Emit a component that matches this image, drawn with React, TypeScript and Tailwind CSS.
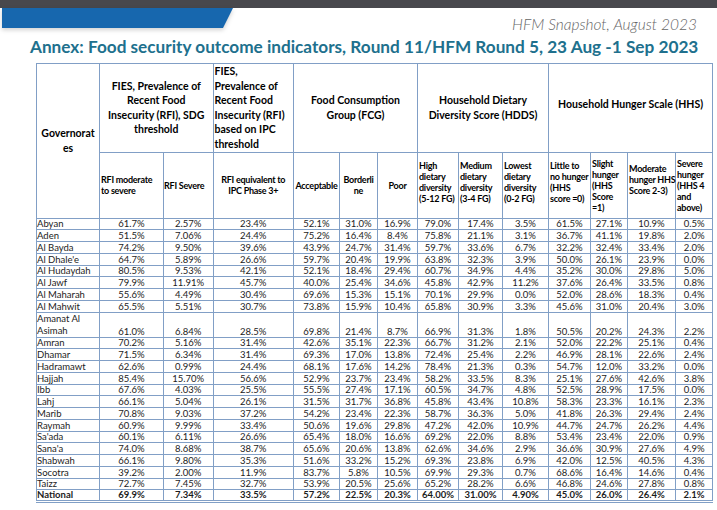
import React from "react";

const rows: string[][] = [
  ["Abyan", "61.7%", "2.57%", "23.4%", "52.1%", "31.0%", "16.9%", "79.0%", "17.4%", "3.5%", "61.5%", "27.1%", "10.9%", "0.5%"],
  ["Aden", "51.5%", "7.06%", "24.4%", "75.2%", "16.4%", "8.4%", "75.8%", "21.1%", "3.1%", "36.7%", "41.1%", "19.8%", "2.0%"],
  ["Al Bayda", "74.2%", "9.50%", "39.6%", "43.9%", "24.7%", "31.4%", "59.7%", "33.6%", "6.7%", "32.2%", "32.4%", "33.4%", "2.0%"],
  ["Al Dhale'e", "64.7%", "5.89%", "26.6%", "59.7%", "20.4%", "19.9%", "63.8%", "32.3%", "3.9%", "50.0%", "26.1%", "23.9%", "0.0%"],
  ["Al Hudaydah", "80.5%", "9.53%", "42.1%", "52.1%", "18.4%", "29.4%", "60.7%", "34.9%", "4.4%", "35.2%", "30.0%", "29.8%", "5.0%"],
  ["Al Jawf", "79.9%", "11.91%", "45.7%", "40.0%", "25.4%", "34.6%", "45.8%", "42.9%", "11.2%", "37.6%", "26.4%", "33.5%", "0.8%"],
  ["Al Maharah", "55.6%", "4.49%", "30.4%", "69.6%", "15.3%", "15.1%", "70.1%", "29.9%", "0.0%", "52.0%", "28.6%", "18.3%", "0.4%"],
  ["Al Mahwit", "65.5%", "5.51%", "30.7%", "73.8%", "15.9%", "10.4%", "65.8%", "30.9%", "3.3%", "45.6%", "31.0%", "20.4%", "3.0%"],
  ["Amanat Al\nAsimah", "61.0%", "6.84%", "28.5%", "69.8%", "21.4%", "8.7%", "66.9%", "31.3%", "1.8%", "50.5%", "20.2%", "24.3%", "2.2%"],
  ["Amran", "70.2%", "5.16%", "31.4%", "42.6%", "35.1%", "22.3%", "66.7%", "31.2%", "2.1%", "52.0%", "22.2%", "25.1%", "0.4%"],
  ["Dhamar", "71.5%", "6.34%", "31.4%", "69.3%", "17.0%", "13.8%", "72.4%", "25.4%", "2.2%", "46.9%", "28.1%", "22.6%", "2.4%"],
  ["Hadramawt", "62.6%", "0.99%", "24.4%", "68.1%", "17.6%", "14.2%", "78.4%", "21.3%", "0.3%", "54.7%", "12.0%", "33.2%", "0.0%"],
  ["Hajjah", "85.4%", "15.70%", "56.6%", "52.9%", "23.7%", "23.4%", "58.2%", "33.5%", "8.3%", "25.1%", "27.6%", "42.6%", "3.8%"],
  ["Ibb", "67.6%", "4.03%", "25.5%", "55.5%", "27.4%", "17.1%", "60.5%", "34.7%", "4.8%", "52.5%", "28.9%", "17.5%", "0.0%"],
  ["Lahj", "66.1%", "5.04%", "26.1%", "31.5%", "31.7%", "36.8%", "45.8%", "43.4%", "10.8%", "58.3%", "23.3%", "16.1%", "2.3%"],
  ["Marib", "70.8%", "9.03%", "37.2%", "54.2%", "23.4%", "22.3%", "58.7%", "36.3%", "5.0%", "41.8%", "26.3%", "29.4%", "2.4%"],
  ["Raymah", "60.9%", "9.99%", "33.4%", "50.6%", "19.6%", "29.8%", "47.2%", "42.0%", "10.9%", "44.7%", "24.7%", "26.2%", "4.4%"],
  ["Sa'ada", "60.1%", "6.11%", "26.6%", "65.4%", "18.0%", "16.6%", "69.2%", "22.0%", "8.8%", "53.4%", "23.4%", "22.0%", "0.9%"],
  ["Sana'a", "74.0%", "8.68%", "38.7%", "65.6%", "20.6%", "13.8%", "62.6%", "34.6%", "2.9%", "36.6%", "30.9%", "27.6%", "4.9%"],
  ["Shabwah", "66.1%", "9.80%", "35.3%", "51.6%", "33.2%", "15.2%", "69.3%", "23.8%", "6.9%", "42.0%", "12.5%", "40.5%", "4.3%"],
  ["Socotra", "39.2%", "2.00%", "11.9%", "83.7%", "5.8%", "10.5%", "69.9%", "29.3%", "0.7%", "68.6%", "16.4%", "14.6%", "0.4%"],
  ["Taizz", "72.7%", "7.45%", "32.7%", "53.9%", "20.5%", "25.6%", "65.2%", "28.2%", "6.6%", "46.8%", "24.6%", "27.8%", "0.8%"],
];

const national = ["National", "69.9%", "7.34%", "33.5%", "57.2%", "22.5%", "20.3%", "64.00%", "31.00%", "4.90%", "45.0%", "26.0%", "26.4%", "2.1%"];

const cell = "border border-[#819fc6] p-0";

export default function App() {
  return (
    <div className="w-[717px] h-[510px] overflow-hidden bg-white font-['Lato',sans-serif] text-[#1c1c1c]">
      <div className="h-[8px] bg-[#48484d]" />
      <div className="flex justify-between">
        <svg width="234" height="22" className="ml-[2px] drop-shadow-[0_2px_2px_rgba(0,0,0,0.18)]">
          <polygon points="0,0 231,0 221,20 0,20" fill="#1767ae" />
        </svg>
        <p className="mr-[20px] mt-[6px] text-[15.5px] leading-[20px] italic font-light text-[#666]">HFM Snapshot, August 2023</p>
      </div>
      <h1 className="ml-[30px] mt-[3px] text-[17.2px] leading-[20px] font-bold text-[#20708d]">
        Annex: Food security outcome indicators, Round 11/HFM Round 5, 23 Aug -1 Sep 2023
      </h1>
      <table className="ml-[36px] mt-[6px] border-collapse table-fixed w-[676px]">
        <colgroup>
          <col className="w-[63px]" />
          <col className="w-[64px]" />
          <col className="w-[49.5px]" />
          <col className="w-[80.5px]" />
          <col className="w-[46px]" />
          <col className="w-[38px]" />
          <col className="w-[40px]" />
          <col className="w-[41px]" />
          <col className="w-[44px]" />
          <col className="w-[46px]" />
          <col className="w-[42px]" />
          <col className="w-[37px]" />
          <col className="w-[48px]" />
          <col className="w-[37px]" />
        </colgroup>
        <thead className="font-bold text-black">
          <tr className="h-[87px] text-[10.5px] leading-[14.6px]">
            <th rowSpan={2} className={`${cell} text-center align-middle font-bold`}>
              Governorat
              <br />
              es
            </th>
            <th colSpan={2} className={`${cell} text-center align-middle font-bold`}>
              FIES, Prevalence of
              <br />
              Recent Food
              <br />
              Insecurity (RFI), SDG
              <br />
              threshold
            </th>
            <th className={`${cell} text-left align-middle font-bold pl-[1px] whitespace-nowrap`}>
              FIES,
              <br />
              Prevalence of
              <br />
              Recent Food
              <br />
              Insecurity (RFI)
              <br />
              based on IPC
              <br />
              threshold
            </th>
            <th colSpan={3} className={`${cell} text-center align-middle font-bold`}>
              Food Consumption
              <br />
              Group (FCG)
            </th>
            <th colSpan={3} className={`${cell} text-center align-middle font-bold`}>
              Household Dietary
              <br />
              Diversity Score (HDDS)
            </th>
            <th colSpan={4} className={`${cell} text-center align-middle font-bold pb-[6px]`}>
              Household Hunger Scale (HHS)
            </th>
          </tr>
          <tr className="h-[66px] text-[9px] leading-[11px] tracking-[-0.25px]">
            <th className={`${cell} text-left align-middle font-bold pl-[1px] whitespace-nowrap`}>
              RFI moderate
              <br />
              to severe
            </th>
            <th className={`${cell} text-left align-middle font-bold whitespace-nowrap`}>RFI Severe</th>
            <th className={`${cell} text-center align-middle font-bold`}>
              RFI equivalent to
              <br />
              IPC Phase 3+
            </th>
            <th className={`${cell} text-center align-middle font-bold whitespace-nowrap`}>Acceptable</th>
            <th className={`${cell} text-center align-middle font-bold`}>
              Borderli
              <br />
              ne
            </th>
            <th className={`${cell} text-center align-middle font-bold`}>Poor</th>
            <th className={`${cell} text-left align-middle font-bold pl-[1px] pb-[6px] whitespace-nowrap`}>
              High
              <br />
              dietary
              <br />
              diversity
              <br />
              (5-12 FG)
            </th>
            <th className={`${cell} text-left align-middle font-bold pl-[1px] pb-[6px] whitespace-nowrap`}>
              Medium
              <br />
              dietary
              <br />
              diversity
              <br />
              (3-4 FG)
            </th>
            <th className={`${cell} text-left align-middle font-bold pl-[1px] pb-[6px] whitespace-nowrap`}>
              Lowest
              <br />
              dietary
              <br />
              diversity
              <br />
              (0-2 FG)
            </th>
            <th className={`${cell} text-left align-middle font-bold pl-[1px] pb-[6px] whitespace-nowrap`}>
              Little to
              <br />
              no hunger
              <br />
              (HHS
              <br />
              score =0)
            </th>
            <th className={`${cell} text-left align-middle font-bold pl-[1px] whitespace-nowrap`}>
              Slight
              <br />
              hunger
              <br />
              (HHS
              <br />
              Score
              <br />
              =1)
            </th>
            <th className={`${cell} text-left align-middle font-bold pl-[1px] pb-[12px] whitespace-nowrap`}>
              Moderate
              <br />
              hunger HHS
              <br />
              Score 2-3)
            </th>
            <th className={`${cell} text-left align-middle font-bold pl-[1px] whitespace-nowrap`}>
              Severe
              <br />
              hunger
              <br />
              (HHS 4
              <br />
              and
              <br />
              above)
            </th>
          </tr>
        </thead>
        <tbody className="text-[9.5px] leading-[10px]">
          {rows.map((r) => (
            <tr key={r[0]} className={r[0].includes("\n") ? "h-[23.5px]" : "h-[11.75px]"}>
              {r.map((v, i) =>
                i === 0 ? (
                  <td key={i} className={`${cell} text-left align-bottom whitespace-pre-line ${v.includes("\n") ? "leading-[12px]" : ""}`}>
                    {v}
                  </td>
                ) : (
                  <td key={i} className={`${cell} text-center align-bottom`}>
                    {v}
                  </td>
                )
              )}
            </tr>
          ))}
          <tr className="h-[11.75px] font-bold border-b-[3px] border-double border-[#819fc6]">
            {national.map((v, i) => (
              <td key={i} className={`${cell} ${i === 0 ? "text-left" : "text-center"} align-bottom`}>
                {v}
              </td>
            ))}
          </tr>
        </tbody>
      </table>
    </div>
  );
}
